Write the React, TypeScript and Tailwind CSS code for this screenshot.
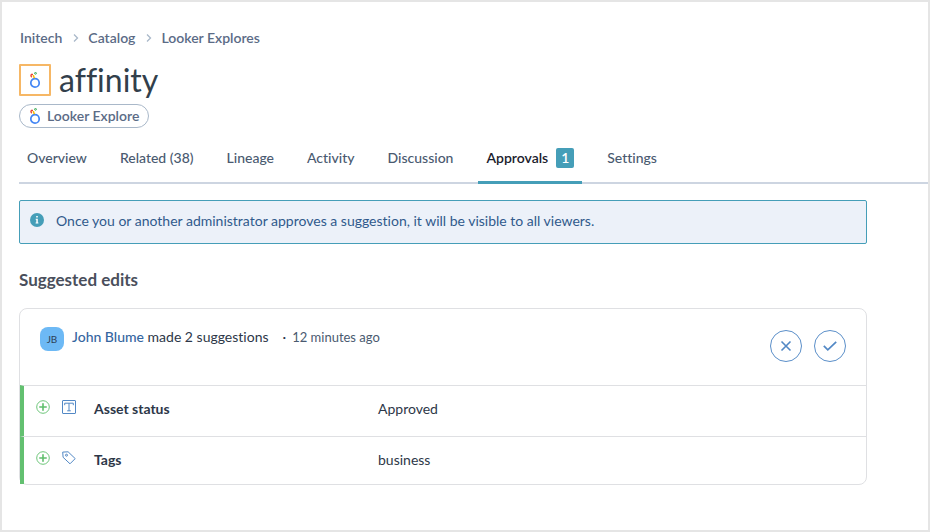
import { Fragment } from "react";
import type { ReactNode } from "react";

function LookerIcon() {
  return (
    <svg width="12" height="16" viewBox="0 0 12 16" fill="none" aria-hidden="true">
      <circle cx="6" cy="10.9" r="4.2" stroke="#4285f4" strokeWidth="1.7" />
      <path d="M2.9 5A1.6 1.6 0 0 1 2.4 2.5L4 2.4" stroke="#ea4335" strokeWidth="1.4" />
      <path d="M4.4 3 4.6 4.4 5.5 6.2" stroke="#fbbc04" strokeWidth="1.5" />
      <circle cx="6.5" cy="1.3" r="0.9" stroke="#34a853" strokeWidth="1" />
    </svg>
  );
}

function InfoIcon() {
  return (
    <svg className="mt-0.5" width="14" height="14" viewBox="0 0 14 14" aria-hidden="true">
      <circle cx="7" cy="7" r="7" fill="#459eb8" />
      <path d="M6.2 3.1h1.6v1.5H6.2zM5.7 5.7h2.1v3.9h.6v1H5.6v-1h.7V6.7h-.6z" fill="#fff" />
    </svg>
  );
}

function PlusIcon() {
  return (
    <svg width="14" height="14" viewBox="0 0 14 14" fill="none" stroke="#5fbf6c" aria-hidden="true">
      <circle cx="7" cy="7" r="6.3" strokeWidth="0.9" />
      <path d="M7 3.8v6.4M3.8 7h6.4" strokeWidth="1.6" strokeLinecap="round" />
    </svg>
  );
}

function TextFieldIcon() {
  return (
    <svg width="14" height="14" viewBox="0 0 14 14" fill="none" stroke="#5288c5" aria-hidden="true">
      <rect x="0.5" y="0.5" width="13" height="13" rx="0.5" />
      <path d="M2.7 5.2V3.2h8.6v2M7 3.2v7.6M5.2 10.8h3.6" strokeWidth="1" />
    </svg>
  );
}

function TagIcon() {
  return (
    <svg width="14" height="14" viewBox="0 0 14 14" fill="none" stroke="#5288c5" aria-hidden="true">
      <path d="M0.7 1.1 6.1 0.8 13.2 7.6 8 12.8 1.1 6.3Z" strokeWidth="1" strokeLinejoin="round" />
      <circle cx="4.5" cy="4.2" r="1" strokeWidth="1" />
    </svg>
  );
}

const crumbs = ["Initech", "Catalog", "Looker Explores"];

const tabs: { label: string; count?: number }[] = [
  { label: "Overview" },
  { label: "Related (38)" },
  { label: "Lineage" },
  { label: "Activity" },
  { label: "Discussion" },
  { label: "Approvals", count: 1 },
  { label: "Settings" },
];

const edits: { icon: ReactNode; field: string; value: string }[] = [
  { icon: <TextFieldIcon />, field: "Asset status", value: "Approved" },
  { icon: <TagIcon />, field: "Tags", value: "business" },
];

export default function App() {
  return (
    <div className="min-h-screen border-2 border-[#e5e5e5] bg-white pl-[17px] pt-[26px] font-[Lato,'Noto_Sans',sans-serif] text-sm text-[#2d3748] [font-variant-ligatures:none]">
      <nav aria-label="Breadcrumb" className="flex h-5 items-center pl-px font-semibold text-[#5b6b86]">
        {crumbs.map((crumb, i) => (
          <Fragment key={crumb}>
            {i > 0 && (
              <svg width="26" height="10" viewBox="0 0 26 10" fill="none" aria-hidden="true">
                <path d="m12 1.5 3.5 3.5-3.5 3.5" stroke="#a9b8c9" strokeWidth="1.3" />
              </svg>
            )}
            <a href="#">{crumb}</a>
          </Fragment>
        ))}
      </nav>

      <header className="mt-3 flex flex-col items-start gap-1">
        <div className="flex h-10 items-center gap-2">
          <span className="flex size-8 items-center justify-center rounded-[1px] border-2 border-[#f6b765]">
            <LookerIcon />
          </span>
          <h1 className="text-[32px] leading-10 text-[#323f4b]">affinity</h1>
        </div>
        <span className="flex h-6 items-center gap-1.5 rounded-full border border-[#a9b8c9] px-[9px] font-semibold text-[#5b6b86]">
          <LookerIcon />
          Looker Explore
        </span>
      </header>

      <nav aria-label="Asset sections" className="mt-2 flex h-12 gap-[17px] border-b-2 border-[#cdd5e1]">
        {tabs.map(({ label, count }) => (
          <a
            key={label}
            href="#"
            aria-current={count ? "page" : undefined}
            className={
              count
                ? "-mb-0.5 flex items-center gap-2 border-b-3 border-[#459eb8] px-2 pb-px font-semibold text-[#1a202c]"
                : "flex items-center px-2 pb-0.5 font-medium text-[#4a5a70]"
            }
          >
            {label}
            {count && (
              <span className="flex h-5 w-[18px] items-center justify-center rounded-[2px] bg-[#459eb8] text-white">
                {count}
              </span>
            )}
          </a>
        ))}
      </nav>

      <main className="mt-4 mr-[61px]">
        <p className="flex min-h-11 items-start gap-3 rounded-[2px] border border-[#459eb8] bg-[#ecf1f9] px-2.5 py-2.5 text-[#305a8c]">
          <InfoIcon />
          Once you or another administrator approves a suggestion, it will be visible to all viewers.
        </p>

        <h2 className="mt-6 text-[17px] leading-6 font-bold text-[#4a4f5c]">Suggested edits</h2>

        <section className="mt-4 rounded-lg border border-[#dfe0e3]">
          <div className="flex h-19 items-start justify-between px-5">
            <div className="mt-[18px] flex gap-2">
              <span className="flex size-6 items-center justify-center rounded-lg bg-[#6db9f5] text-[10px] text-[#2d3f55]">
                JB
              </span>
              <p className="leading-5">
                <a href="#" className="font-medium text-[#3566a0]">
                  John Blume
                </a>{" "}
                made 2 suggestions
                <span className="mr-1.5 ml-3.5">·</span>
                <span className="text-[13px] text-[#4a5a70]">12 minutes ago</span>
              </p>
            </div>
            <div className="mt-[21px] flex gap-3">
              <button
                type="button"
                aria-label="Reject suggestions"
                className="flex size-8 items-center justify-center rounded-full border border-[#5b8fc9]"
              >
                <svg width="12" height="12" viewBox="0 0 12 12" fill="none" aria-hidden="true">
                  <path d="m1.5 1.5 9 9m0-9-9 9" stroke="#5288c5" strokeWidth="1.6" />
                </svg>
              </button>
              <button
                type="button"
                aria-label="Approve suggestions"
                className="flex size-8 items-center justify-center rounded-full border border-[#5b8fc9]"
              >
                <svg width="14" height="10" viewBox="0 0 14 10" fill="none" aria-hidden="true">
                  <path d="m0.8 4.8 4 4 8.4-8" stroke="#5288c5" strokeWidth="1.7" />
                </svg>
              </button>
            </div>
          </div>

          <table className="w-full table-fixed border-separate border-spacing-0 text-left">
            <tbody>
              {edits.map(({ icon, field, value }) => (
                <tr key={field} className="h-[51px] align-top last:h-12">
                  <th scope="row" className="w-[358px] border-t border-l-4 border-t-[#dfe0e3] border-l-[#63c070] p-0 pt-[13px] font-bold">
                    <span className="flex items-start">
                      <span className="mt-px ml-3 flex w-[58px] gap-3">
                        <PlusIcon />
                        {icon}
                      </span>
                      {field}
                    </span>
                  </th>
                  <td className="border-t border-[#dfe0e3] p-0 pt-[13px]">{value}</td>
                </tr>
              ))}
            </tbody>
          </table>
        </section>
      </main>
    </div>
  );
}
